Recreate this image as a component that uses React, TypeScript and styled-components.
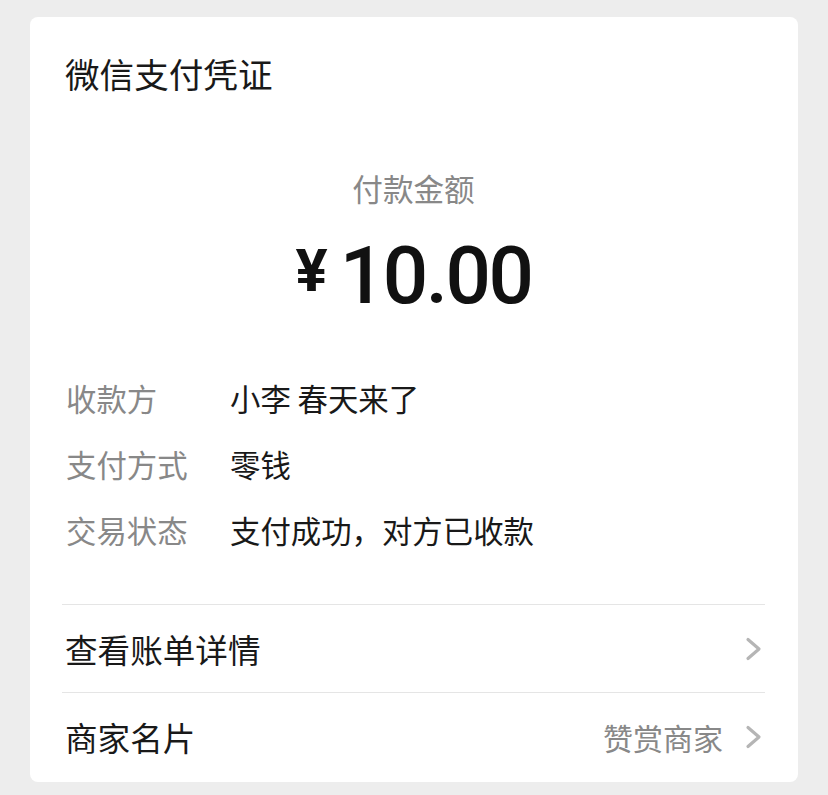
import React from "react";
import styled, { createGlobalStyle } from "styled-components";

const GlobalStyle = createGlobalStyle`
    html, body {
        margin: 0;
        padding: 0;
        background: #ededed;
    }
    body {
        font-family: "Noto Sans CJK SC", "Noto Sans", sans-serif;
        color: #191919;
    }
`;

interface DetailItem {
    label: string;
    value: string;
}

const details: DetailItem[] = [
    { label: "收款方", value: "小李 春天来了" },
    { label: "支付方式", value: "零钱" },
    { label: "交易状态", value: "支付成功，对方已收款" },
];

const Page = styled.div`
    padding: 17px 30px 13px 30px;
`;

const Card = styled.div`
    background: #ffffff;
    border-radius: 8px;
    padding: 36px 33px 2px 32px;
    display: flex;
    flex-direction: column;
`;

const Title = styled.div`
    font-size: 34.6px;
    line-height: 40px;
    padding-left: 3px;
`;

const AmountLabel = styled.div`
    margin-top: 75px;
    text-align: center;
    font-size: 30.6px;
    line-height: 40px;
    color: #888888;
`;

const AmountRow = styled.div`
    margin-top: 22px;
    height: 90px;
    display: flex;
    justify-content: center;
    align-items: flex-start;
    font-family: Roboto, "Liberation Sans", sans-serif;
    color: #111111;
`;

const Currency = styled.span`
    font-size: 60px;
    font-weight: 700;
    line-height: 56px;
    margin-top: 13px;
    margin-right: 12px;
`;

const Amount = styled.span`
    font-size: 80px;
    font-weight: 500;
    line-height: 90px;
    letter-spacing: -2.5px;
    margin-top: 1px;
`;

const DetailList = styled.div`
    margin-top: 45px;
    margin-bottom: 41px;
    display: flex;
    flex-direction: column;
`;

const DetailRow = styled.div`
    display: grid;
    grid-template-columns: 164px 1fr;
    height: 66px;
    align-items: center;
    padding-left: 4px;
    font-size: 30.4px;
`;

const DetailLabel = styled.span`
    color: #888888;
`;

const DetailValue = styled.span`
    color: #191919;
`;

const LinkRow = styled.div`
    display: flex;
    align-items: center;
    height: 87px;
    border-top: 1px solid #e5e5e5;
    padding-left: 3px;
    padding-right: 3px;
    font-size: 32.6px;
`;

const LinkTitle = styled.span`
    flex: 1;
`;

const LinkExtra = styled.span`
    font-size: 30px;
    color: #888888;
    margin-right: 22px;
`;

const Chevron: React.FC = () => (
    <svg width="17" height="24" viewBox="0 0 17 24">
        <polyline
            points="3,2.5 14,12 3,21.5"
            fill="none"
            stroke="#b5b5b5"
            strokeWidth="3.2"
            strokeLinecap="round"
            strokeLinejoin="round"
        />
    </svg>
);

export default function App() {
    return (
        <>
            <GlobalStyle />
            <Page>
                <Card>
                    <Title>微信支付凭证</Title>
                    <AmountLabel>付款金额</AmountLabel>
                    <AmountRow>
                        <Currency>¥</Currency>
                        <Amount>10.00</Amount>
                    </AmountRow>
                    <DetailList>
                        {details.map(d => (
                            <DetailRow key={d.label}>
                                <DetailLabel>{d.label}</DetailLabel>
                                <DetailValue>{d.value}</DetailValue>
                            </DetailRow>
                        ))}
                    </DetailList>
                    <LinkRow>
                        <LinkTitle>查看账单详情</LinkTitle>
                        <Chevron />
                    </LinkRow>
                    <LinkRow>
                        <LinkTitle>商家名片</LinkTitle>
                        <LinkExtra>赞赏商家</LinkExtra>
                        <Chevron />
                    </LinkRow>
                </Card>
            </Page>
        </>
    );
}
